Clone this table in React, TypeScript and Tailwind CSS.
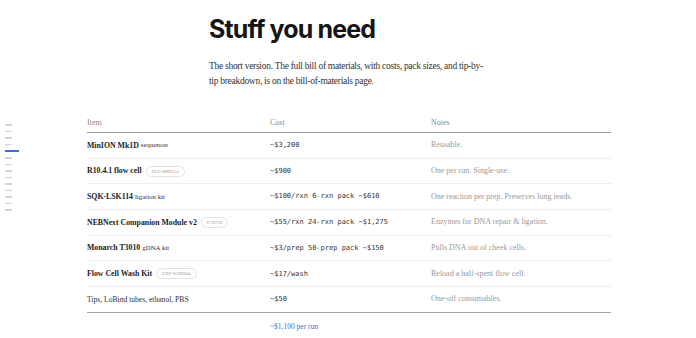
import React from "react";

const serif = { fontFamily: '"Liberation Serif", "DejaVu Serif", serif' };

type Row = { name: string; suffix?: string; badge?: string; plain?: boolean; cost: string; note: string };

const rows: Row[] = [
  { name: "MinION Mk1D", suffix: "sequencer", cost: "~$3,200", note: "Reusable." },
  { name: "R10.4.1 flow cell", badge: "FLO-MIN114", cost: "~$900", note: "One per run. Single-use." },
  { name: "SQK-LSK114", suffix: "ligation kit", cost: "~$100/rxn 6-rxn pack ~$610", note: "One reaction per prep. Preserves long reads." },
  { name: "NEBNext Companion Module v2", badge: "E7672S", cost: "~$55/rxn 24-rxn pack ~$1,275", note: "Enzymes for DNA repair & ligation." },
  { name: "Monarch T3010", suffix: "gDNA kit", cost: "~$3/prep 50-prep pack ~$150", note: "Pulls DNA out of cheek cells." },
  { name: "Flow Cell Wash Kit", badge: "EXP-WSH004", cost: "~$17/wash", note: "Reload a half-spent flow cell." },
  { name: "Tips, LoBind tubes, ethanol, PBS", plain: true, cost: "~$50", note: "One-off consumables." },
];

export default function App() {
  return (
    <div className="relative w-[696px] h-[338px] overflow-hidden bg-white" style={serif}>
      <div className="absolute left-[5px] top-[124px] flex flex-col gap-[5px]">
        {Array.from({ length: 14 }).map((_, i) => (
          <div
            key={i}
            className={i === 4 ? "h-[2px] w-[14px] bg-[#3b6fe0]" : "h-[1.5px] w-[7px] bg-[#d4d4d4]"}
          />
        ))}
      </div>

      <div className="flex flex-col items-center">
        <div className="w-[280px] ml-[2px] pt-[14px]">
          <h1
            className="text-[25px] font-bold leading-[30px] tracking-[-0.035em] text-[#151515]"
            style={{ fontFamily: 'Inter, "Liberation Sans", sans-serif' }}
          >
            Stuff you need
          </h1>
          <p className="mt-[15px] text-[9.5px] leading-[15px] tracking-[-0.03em] text-[#333] w-[278px]">
            The short version. The full bill of materials, with costs, pack sizes, and tip-by-tip breakdown, is on
            the bill-of-materials page.
          </p>
        </div>

        <div className="w-[524px] mt-[24px] ml-[2px]">
          <div className="flex h-[20px] items-center border-b border-[#9a9a9a] text-[8px] text-[#8a8a8a]">
            <div className="w-[183px]">Item</div>
            <div className="w-[161px]">Cost</div>
            <div className="flex-1">Notes</div>
          </div>
          {rows.map((r, i) => (
            <div
              key={i}
              className={`flex h-[25.7px] items-center ${i < rows.length - 1 ? "border-b border-[#eeeeee]" : "border-b border-[#a5a5a5]"}`}
            >
              <div className="w-[183px] flex items-center text-[7.8px] text-[#1c1c1c]">
                {r.plain ? (
                  <span className="text-[7.6px] text-[#333]">{r.name}</span>
                ) : (
                  <span className="font-bold">{r.name}</span>
                )}
                {r.suffix && <span className="ml-[2px] text-[6.9px] text-[#333]">{r.suffix}</span>}
                {r.badge && (
                  <span className="ml-[4px] rounded-full border border-[#e2e2e2] px-[5px] py-[1px] text-[4.6px] leading-[7px] tracking-wide text-[#999]">
                    {r.badge}
                  </span>
                )}
              </div>
              <div
                className="w-[161px] text-[7px] text-[#333]"
                style={{ fontFamily: '"DejaVu Sans Mono", "Liberation Mono", monospace' }}
              >
                {r.cost}
              </div>
              <div className="flex-1 text-[8px] text-[#9a9a9a]">{r.note}</div>
            </div>
          ))}
          <div className="flex h-[27px] items-center">
            <div className="w-[183px]" />
            <div className="text-[7.5px] text-[#3b6fe0]">~$1,100 per run</div>
          </div>
        </div>
      </div>
    </div>
  );
}
